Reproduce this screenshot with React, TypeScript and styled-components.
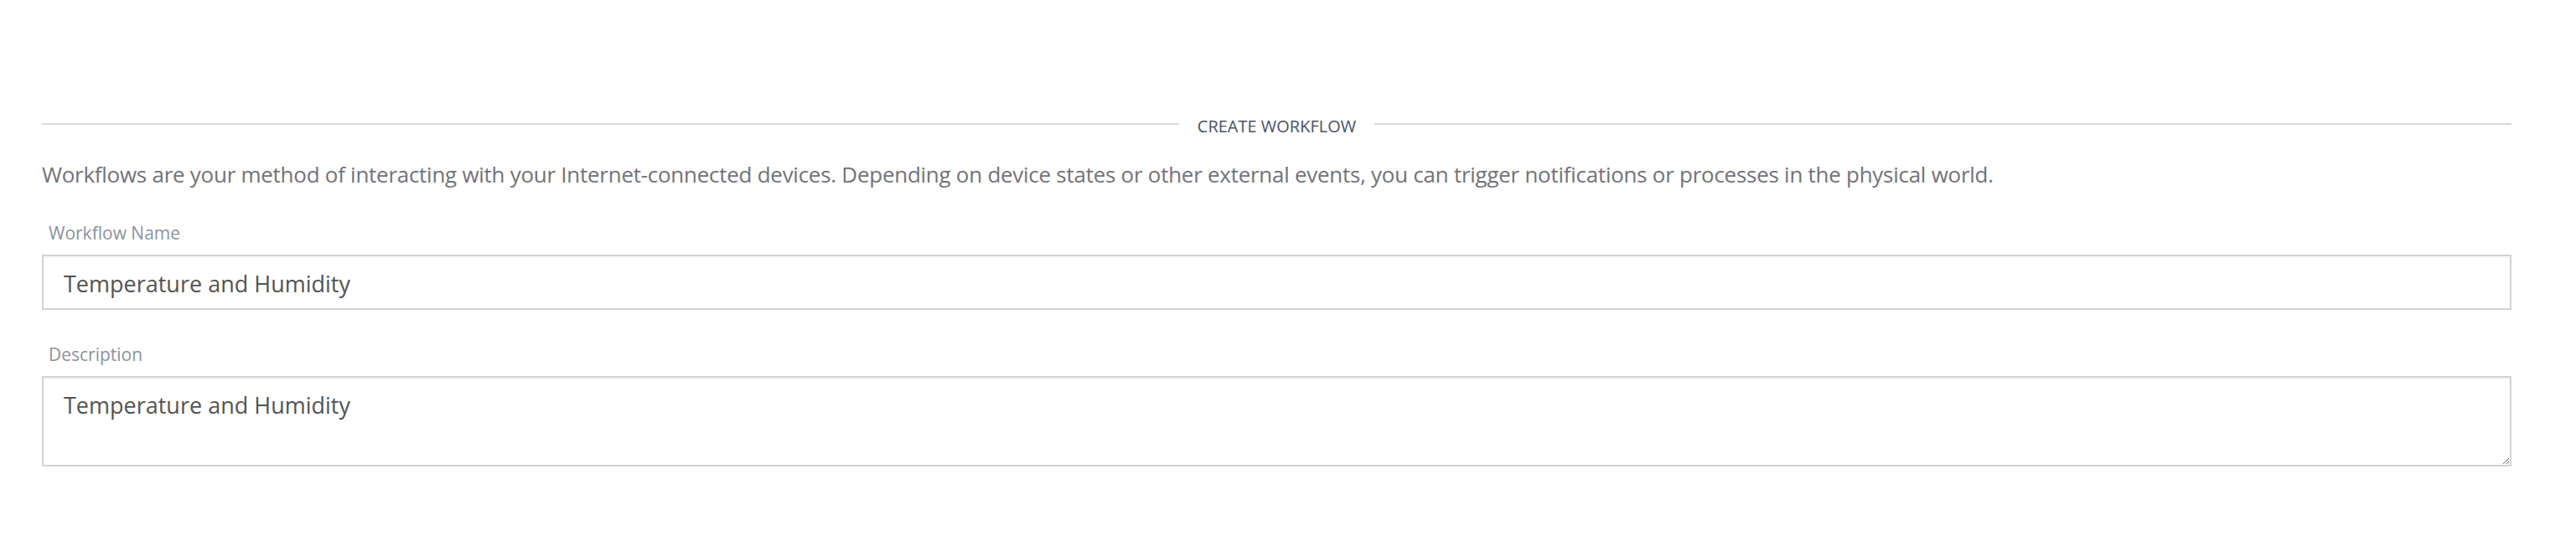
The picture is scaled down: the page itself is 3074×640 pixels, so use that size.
import React from "react";
import styled, { createGlobalStyle } from "styled-components";

const GlobalStyle = createGlobalStyle`
  html, body {
    margin: 0;
    padding: 0;
    background: #ffffff;
  }
  body {
    font-family: "Open Sans", "Noto Sans", "Liberation Sans", sans-serif;
  }
  * { box-sizing: border-box; }
`;

const Page = styled.main`
  padding: 134px 77px 40px 50px;
`;

const Header = styled.div`
  display: flex;
  align-items: center;
  height: 28px;
`;

const Rule = styled.span`
  flex: 1;
  height: 2px;
  background: #d9d9d9;
`;

const Title = styled.h2`
  margin: 5px 22px 0;
  font-size: 20px;
  line-height: 28px;
  font-weight: 400;
  color: #4a5164;
  text-transform: uppercase;
  white-space: nowrap;
`;

const Intro = styled.p`
  margin: 26px 0 0;
  font-size: 26px;
  letter-spacing: -0.27px;
  line-height: 40px;
  color: #727279;
`;

const Form = styled.form`
  display: flex;
  flex-direction: column;
  gap: 39px;
  margin-top: 36px;
`;

const Field = styled.label`
  display: flex;
  flex-direction: column;
  gap: 12px;
`;

const FieldLabel = styled.span`
  padding-left: 8px;
  font-size: 21px;
  line-height: 28px;
  color: #8c929c;
`;

const inputBase = `
  width: 100%;
  border: 2px solid #d3d3d3;
  border-radius: 0;
  background: #fff;
  box-shadow: inset 0 2px 3px rgba(0, 0, 0, 0.05);
  font-family: "Open Sans", "Noto Sans", "Liberation Sans", sans-serif;
  font-size: 27px;
  color: #535353;
  outline: none;
  margin: 0;
`;

const TextInput = styled.input`
  ${inputBase}
  height: 66px;
  padding: 3px 24px 0;
`;

const TextArea = styled.textarea`
  ${inputBase}
  display: block;
  height: 108px;
  padding: 14px 24px 12px;
  line-height: normal;
  resize: vertical;
`;

export default function App() {
  return (
    <>
      <GlobalStyle />
      <Page>
        <Header>
          <Rule />
          <Title>Create Workflow</Title>
          <Rule />
        </Header>
        <Intro>
          Workflows are your method of interacting with your Internet-connected devices. Depending on
          device states or other external events, you can trigger notifications or processes in the
          physical world.
        </Intro>
        <Form onSubmit={(e) => e.preventDefault()}>
          <Field>
            <FieldLabel>Workflow Name</FieldLabel>
            <TextInput type="text" defaultValue="Temperature and Humidity" />
          </Field>
          <Field>
            <FieldLabel>Description</FieldLabel>
            <TextArea defaultValue="Temperature and Humidity" />
          </Field>
        </Form>
      </Page>
    </>
  );
}
